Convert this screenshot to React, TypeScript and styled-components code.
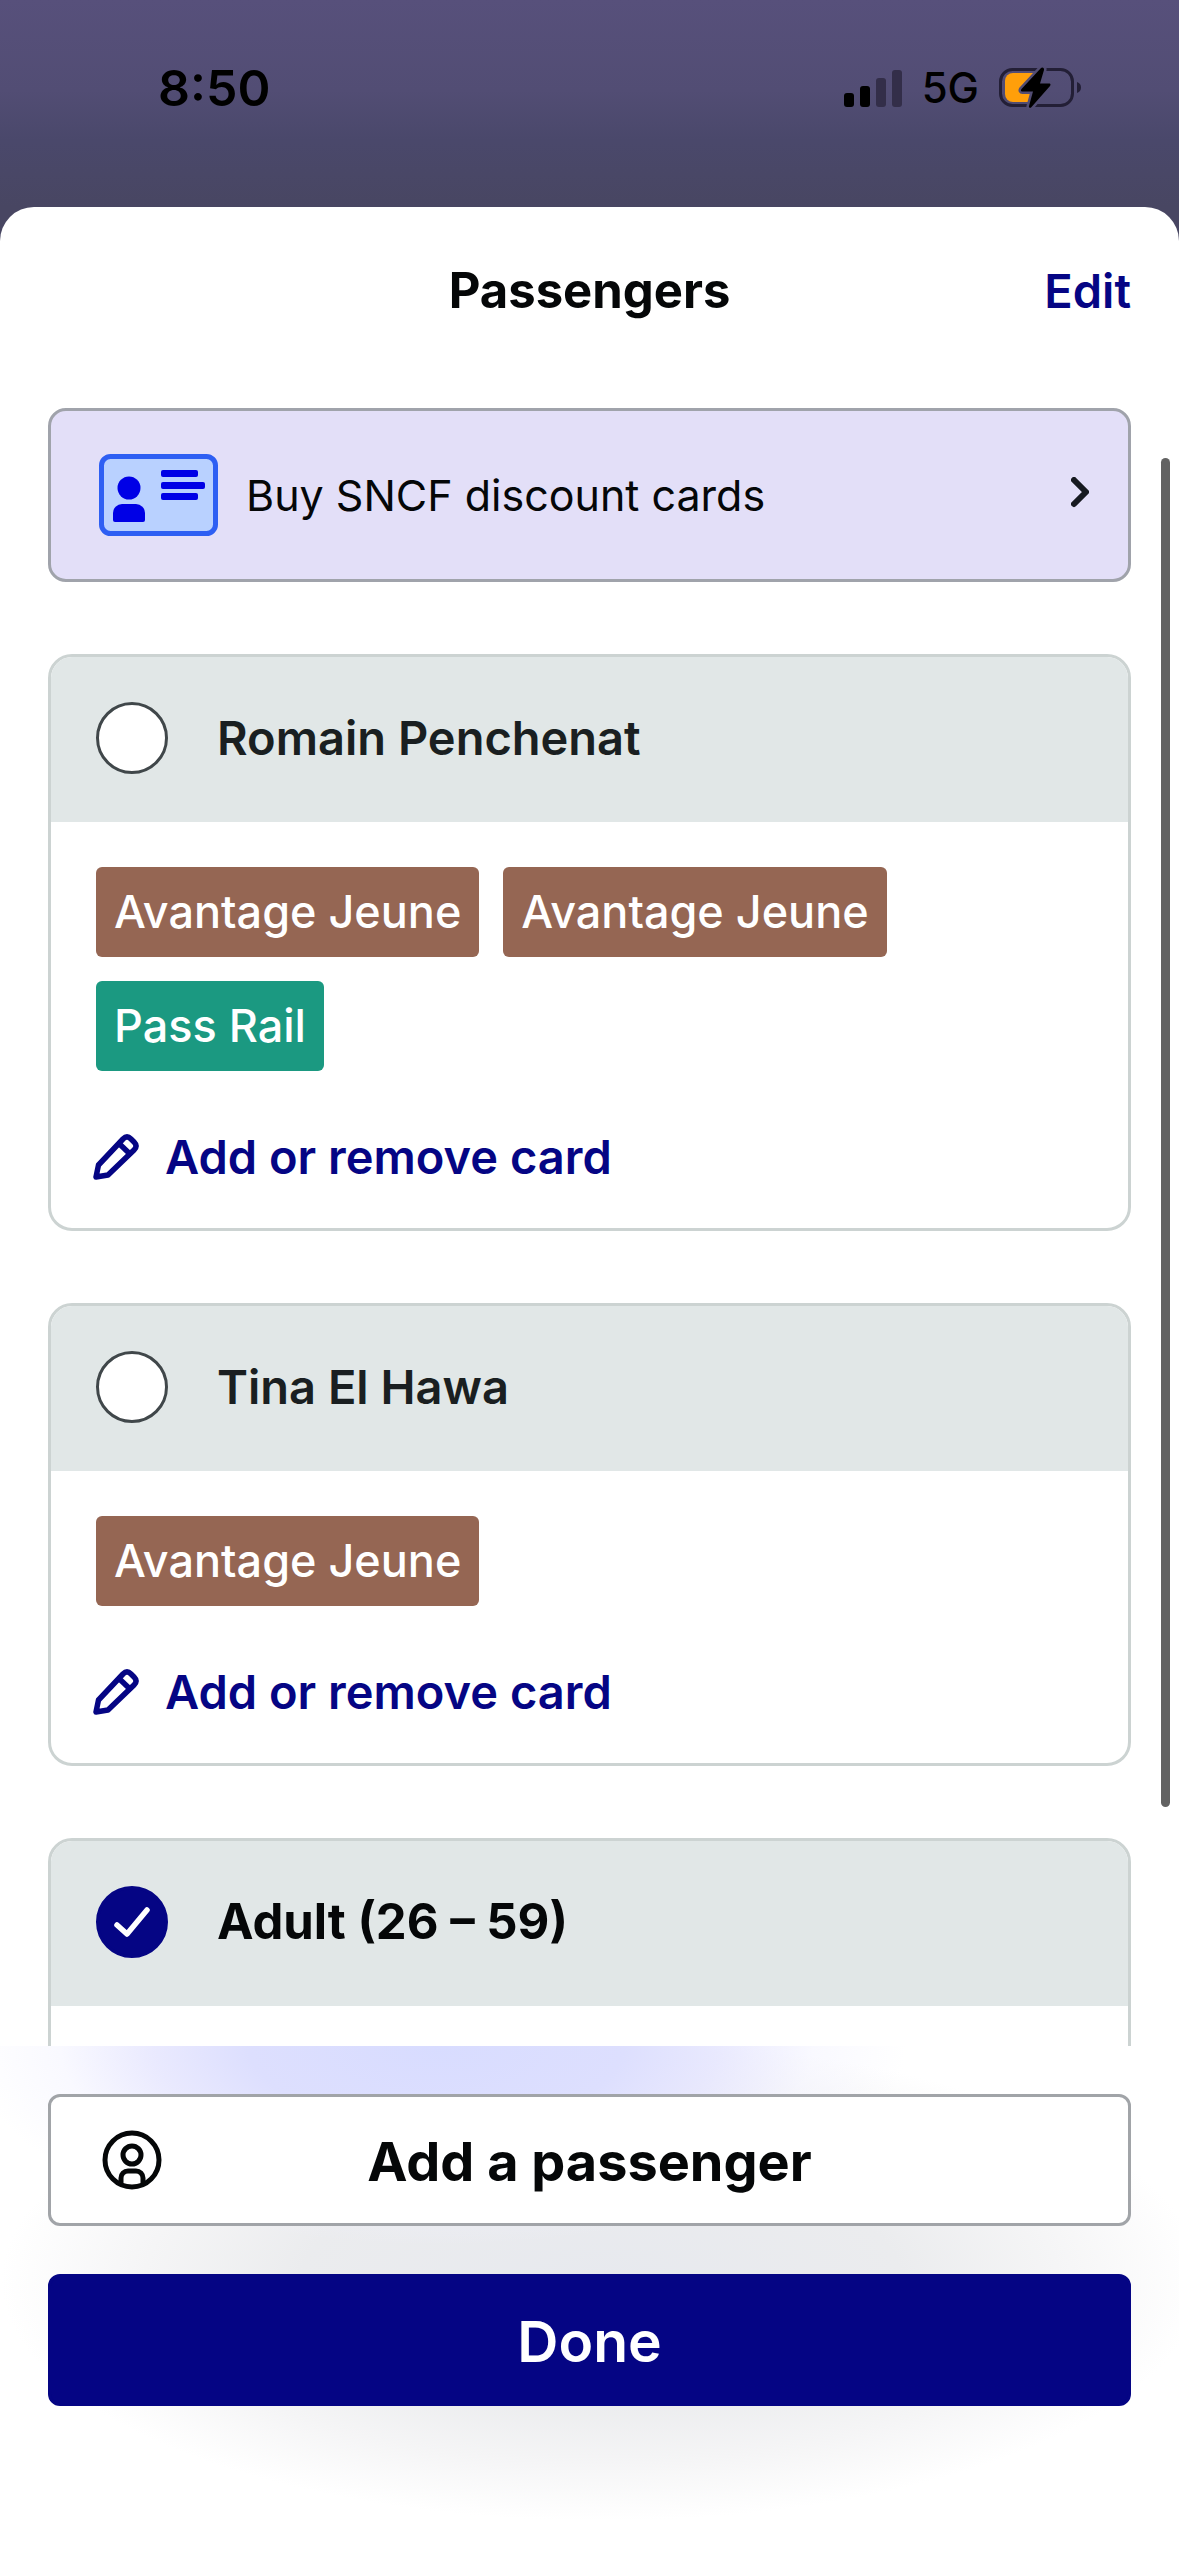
import React, { useId, useState } from "react";
import styled, { createGlobalStyle } from "styled-components";

const navy = "#050584";

const GlobalStyle = createGlobalStyle`
  *, *::before, *::after { box-sizing: border-box; }
  body {
    margin: 0;
    background: #fff;
    font-family: Inter, "Liberation Sans", sans-serif;
    color: #050708;
  }
  button, input { font: inherit; color: inherit; margin: 0; }
`;

const Screen = styled.div`
  display: flex;
  flex-direction: column;
  height: 100vh;
  background: linear-gradient(#57507b 0, #524d74 90px, #4a486b 140px, #484662 207px, #484662 260px);
`;

const StatusBar = styled.header`
  display: flex;
  align-items: center;
  justify-content: space-between;
  flex: none;
  height: 207px;
  padding: 0 97px 32px 158px;
  color: #000;
`;

const Clock = styled.time`
  font-size: 50px;
  line-height: 60px;
  font-weight: 600;
`;

const StatusIcons = styled.div`
  display: flex;
  align-items: center;
  gap: 20px;
`;

const Network = styled.span`
  font-size: 42px;
  line-height: 60px;
  font-weight: 500;
`;

const Sheet = styled.main`
  display: flex;
  flex-direction: column;
  flex: 1;
  min-height: 0;
  overflow: hidden;
  background: #fff;
  border-radius: 34px 34px 0 0;
`;

const SheetHeader = styled.div`
  display: grid;
  grid-template-columns: 1fr auto 1fr;
  align-items: center;
  flex: none;
  height: 168px;
  padding: 0 48px;
`;

const Title = styled.h1`
  grid-column: 2;
  margin: 0;
  font-size: 49px;
  line-height: 60px;
  font-weight: 700;
`;

const EditButton = styled.button`
  justify-self: end;
  padding: 0;
  border: 0;
  background: none;
  color: ${navy};
  font-size: 47px;
  line-height: 60px;
  font-weight: 600;
`;

const ScrollArea = styled.div`
  position: relative;
  flex: 1;
  min-height: 0;
  overflow: hidden;
`;

const ScrollThumb = styled.div`
  position: absolute;
  top: 83px;
  right: 9px;
  width: 9px;
  height: 1349px;
  border-radius: 5px;
  background: #626262;
`;

const Content = styled.div`
  display: flex;
  flex-direction: column;
  gap: 72px;
  padding: 33px 48px;
`;

const Promo = styled.a`
  display: flex;
  align-items: center;
  gap: 28px;
  height: 174px;
  padding: 0 39px 0 48px;
  border: 3px solid #a0a3ab;
  border-radius: 18px;
  background: #e3dff8;
  color: inherit;
  text-decoration: none;
`;

const PromoText = styled.span`
  flex: 1;
  font-size: 43px;
  line-height: 60px;
`;

const Card = styled.section`
  border: 3px solid #ccd3d2;
  border-radius: 24px;
  overflow: hidden;
`;

const CardHeader = styled.label`
  display: flex;
  align-items: center;
  gap: 49px;
  height: 165px;
  padding: 0 45px 3px;
  background: #e1e7e7;
`;

const Name = styled.span<{ $selected: boolean }>`
  font-size: ${(p) => (p.$selected ? 49 : 47)}px;
  line-height: 60px;
  font-weight: ${(p) => (p.$selected ? 700 : 600)};
  color: ${(p) => (p.$selected ? "#050708" : "#1a1f21")};
`;

const TickBox = styled.span`
  display: grid;
  width: 72px;
  height: 72px;
  & > * { grid-area: 1 / 1; }
`;

const Tick = styled.input`
  appearance: none;
  width: 72px;
  height: 72px;
  border: 3px solid #40474a;
  border-radius: 50%;
  background: #fff;
  &:checked { background: ${navy}; border-color: ${navy}; }
`;

const CardBody = styled.div`
  display: flex;
  flex-direction: column;
  align-items: flex-start;
  gap: 50px;
  padding: 45px 45px 35px;
`;

const Chips = styled.ul`
  display: flex;
  flex-wrap: wrap;
  gap: 24px;
  margin: 0;
  padding: 0;
  list-style: none;
`;

const Chip = styled.li<{ $color: string }>`
  padding: 15px 18px;
  border-radius: 6px;
  background: ${(p) => p.$color};
  color: #fff;
  font-size: 45px;
  line-height: 60px;
  font-weight: 500;
`;

const CardLink = styled.button`
  display: flex;
  align-items: center;
  gap: 26px;
  height: 72px;
  margin-left: -3px;
  padding: 0;
  border: 0;
  background: none;
  color: ${navy};
  font-size: 47px;
  line-height: 60px;
  font-weight: 600;
`;

const Footer = styled.footer`
  display: flex;
  flex-direction: column;
  gap: 48px;
  flex: none;
  padding: 48px 48px 150px;
  background:
    radial-gradient(ellipse 470px 200px at 37% 0, #d8dcff 0, #dddffe 40%, rgba(228, 228, 254, 0.8) 60%, rgba(240, 240, 255, 0.4) 80%, rgba(255, 255, 255, 0) 100%),
    radial-gradient(ellipse 600px 240px at 51% 46%, #e7e9ee 0, #ebecee 50%, #f5f5f6 76%, rgba(255, 255, 255, 0) 100%),
    #fff;
`;

const FooterButton = styled.button<{ $primary?: boolean }>`
  display: grid;
  grid-template-columns: 60px 1fr 60px;
  align-items: center;
  height: 132px;
  padding: 0 51px;
  border: 3px solid ${(p) => (p.$primary ? navy : "#a1a4a8")};
  border-radius: 12px;
  background: ${(p) => (p.$primary ? navy : "#fff")};
  color: ${(p) => (p.$primary ? "#fff" : "#050708")};
  font-size: ${(p) => (p.$primary ? 57 : 54)}px;
  line-height: 72px;
  font-weight: ${(p) => (p.$primary ? 600 : 700)};
`;

const FooterLabel = styled.span`
  grid-column: 2;
  padding-top: 3px;
`;

const SignalIcon = () => (
  <svg width="58" height="40" viewBox="0 0 58 40" aria-hidden="true">
    <rect x="0" y="25" width="10" height="14" rx="3" />
    <rect x="16" y="18" width="10" height="21" rx="3" />
    <rect x="32" y="10" width="10" height="29" rx="3" fill="#332e49" />
    <rect x="48" y="2" width="10" height="37" rx="3" fill="#332e49" />
  </svg>
);

const BatteryIcon = () => (
  <svg width="83" height="42" viewBox="0 0 83 42" aria-hidden="true">
    <rect x="1.5" y="2.5" width="72" height="36" rx="12" fill="none" stroke="#231f36" strokeWidth="3" />
    <path d="M78 15c3 1 4 3 4 5.500s-1 4.500-4 5.500z" fill="#231f36" />
    <path d="M14 6h20v29H14a8 8 0 0 1-8-8V14a8 8 0 0 1 8-8z" fill="#ff9f0a" />
    <path
      d="M42 1 22.500 22c-1 1.500-.5 2.500 1 2.500H34L30 39c-.5 2 1.500 2.500 2.500 1L51 19c1-1.500.5-2.500-1-2.500H41L45 3c.5-2-1.500-3.500-3-2z"
      fill="#000"
      stroke="#524d73"
      strokeWidth="5"
      paintOrder="stroke"
    />
  </svg>
);

const DiscountCardIcon = () => (
  <svg width="119" height="82" viewBox="0 0 119 82" aria-hidden="true">
    <rect x="2.500" y="2.500" width="114" height="77" rx="9" fill="#b9d1ff" stroke="#2e5ff3" strokeWidth="5" />
    <circle cx="30" cy="34" r="11.500" fill="#0000e6" />
    <path d="M14 66V59a9 9 0 0 1 9-9h14a9 9 0 0 1 9 9v7a2 2 0 0 1-2 2H16a2 2 0 0 1-2-2z" fill="#0000e6" />
    <rect x="62" y="16" width="37" height="7" rx="2" fill="#0000e6" />
    <rect x="62" y="28" width="44" height="7" rx="2" fill="#0000e6" />
    <rect x="62" y="39" width="37" height="7" rx="2" fill="#0000e6" />
  </svg>
);

const ChevronIcon = () => (
  <svg width="18" height="36" viewBox="0 0 18 36" fill="none" stroke="#171a21" strokeWidth="6" strokeLinecap="round" strokeLinejoin="round" aria-hidden="true">
    <path d="M3 3 15 15 3 27" />
  </svg>
);

const PencilIcon = () => (
  <svg width="46" height="46" viewBox="0 0 46 46" fill="none" stroke="currentColor" strokeWidth="5.500" strokeLinejoin="round" aria-hidden="true">
    <path d="M3 43 5.500 31 30 5q4-4 8 0l3 3q4 4 0 8L15 41z" />
    <path d="M26.500 10 37 20" />
  </svg>
);

const CheckIcon = () => (
  <svg width="72" height="72" viewBox="0 0 72 72" fill="none" stroke="#fff" strokeWidth="5.500" strokeLinecap="round" strokeLinejoin="round" pointerEvents="none" aria-hidden="true">
    <path d="M21 39 31 48 51 24" />
  </svg>
);

const PersonIcon = () => (
  <svg width="60" height="60" viewBox="0 0 60 60" fill="none" stroke="currentColor" strokeWidth="5" aria-hidden="true">
    <circle cx="30" cy="30" r="27" />
    <circle cx="30" cy="25" r="9" />
    <path d="M19 54V48a7 7 0 0 1 7-7h8a7 7 0 0 1 7 7v6" />
  </svg>
);

const chipColors = { "Avantage Jeune": "#956653", "Pass Rail": "#1b9981" };

type Passenger = {
  name: string;
  cards: (keyof typeof chipColors)[];
  selected: boolean;
};

const passengers: Passenger[] = [
  { name: "Romain Penchenat", cards: ["Avantage Jeune", "Avantage Jeune", "Pass Rail"], selected: false },
  { name: "Tina El Hawa", cards: ["Avantage Jeune"], selected: false },
  { name: "Adult (26 – 59)", cards: [], selected: true },
];

function PassengerCard({ passenger }: { passenger: Passenger }) {
  const id = useId();
  const [selected, setSelected] = useState(passenger.selected);
  return (
    <Card>
      <CardHeader htmlFor={id}>
        <TickBox>
          <Tick id={id} type="checkbox" checked={selected} onChange={(e) => setSelected(e.target.checked)} />
          {selected && <CheckIcon />}
        </TickBox>
        <Name $selected={selected}>{passenger.name}</Name>
      </CardHeader>
      <CardBody>
        {passenger.cards.length > 0 && (
          <>
            <Chips>
              {passenger.cards.map((card, i) => (
                <Chip key={i} $color={chipColors[card]}>{card}</Chip>
              ))}
            </Chips>
            <CardLink type="button">
              <PencilIcon />
              Add or remove card
            </CardLink>
          </>
        )}
      </CardBody>
    </Card>
  );
}

export default function App() {
  return (
    <Screen>
      <GlobalStyle />
      <StatusBar>
        <Clock>8:50</Clock>
        <StatusIcons>
          <SignalIcon />
          <Network>5G</Network>
          <BatteryIcon />
        </StatusIcons>
      </StatusBar>
      <Sheet>
        <SheetHeader>
          <Title>Passengers</Title>
          <EditButton type="button">Edit</EditButton>
        </SheetHeader>
        <ScrollArea>
          <Content>
            <Promo href="#discount-cards">
              <DiscountCardIcon />
              <PromoText>Buy SNCF discount cards</PromoText>
              <ChevronIcon />
            </Promo>
            {passengers.map((p) => (
              <PassengerCard key={p.name} passenger={p} />
            ))}
          </Content>
          <ScrollThumb />
        </ScrollArea>
        <Footer>
          <FooterButton type="button">
            <PersonIcon />
            <FooterLabel>Add a passenger</FooterLabel>
          </FooterButton>
          <FooterButton type="button" $primary>
            <FooterLabel>Done</FooterLabel>
          </FooterButton>
        </Footer>
      </Sheet>
    </Screen>
  );
}
